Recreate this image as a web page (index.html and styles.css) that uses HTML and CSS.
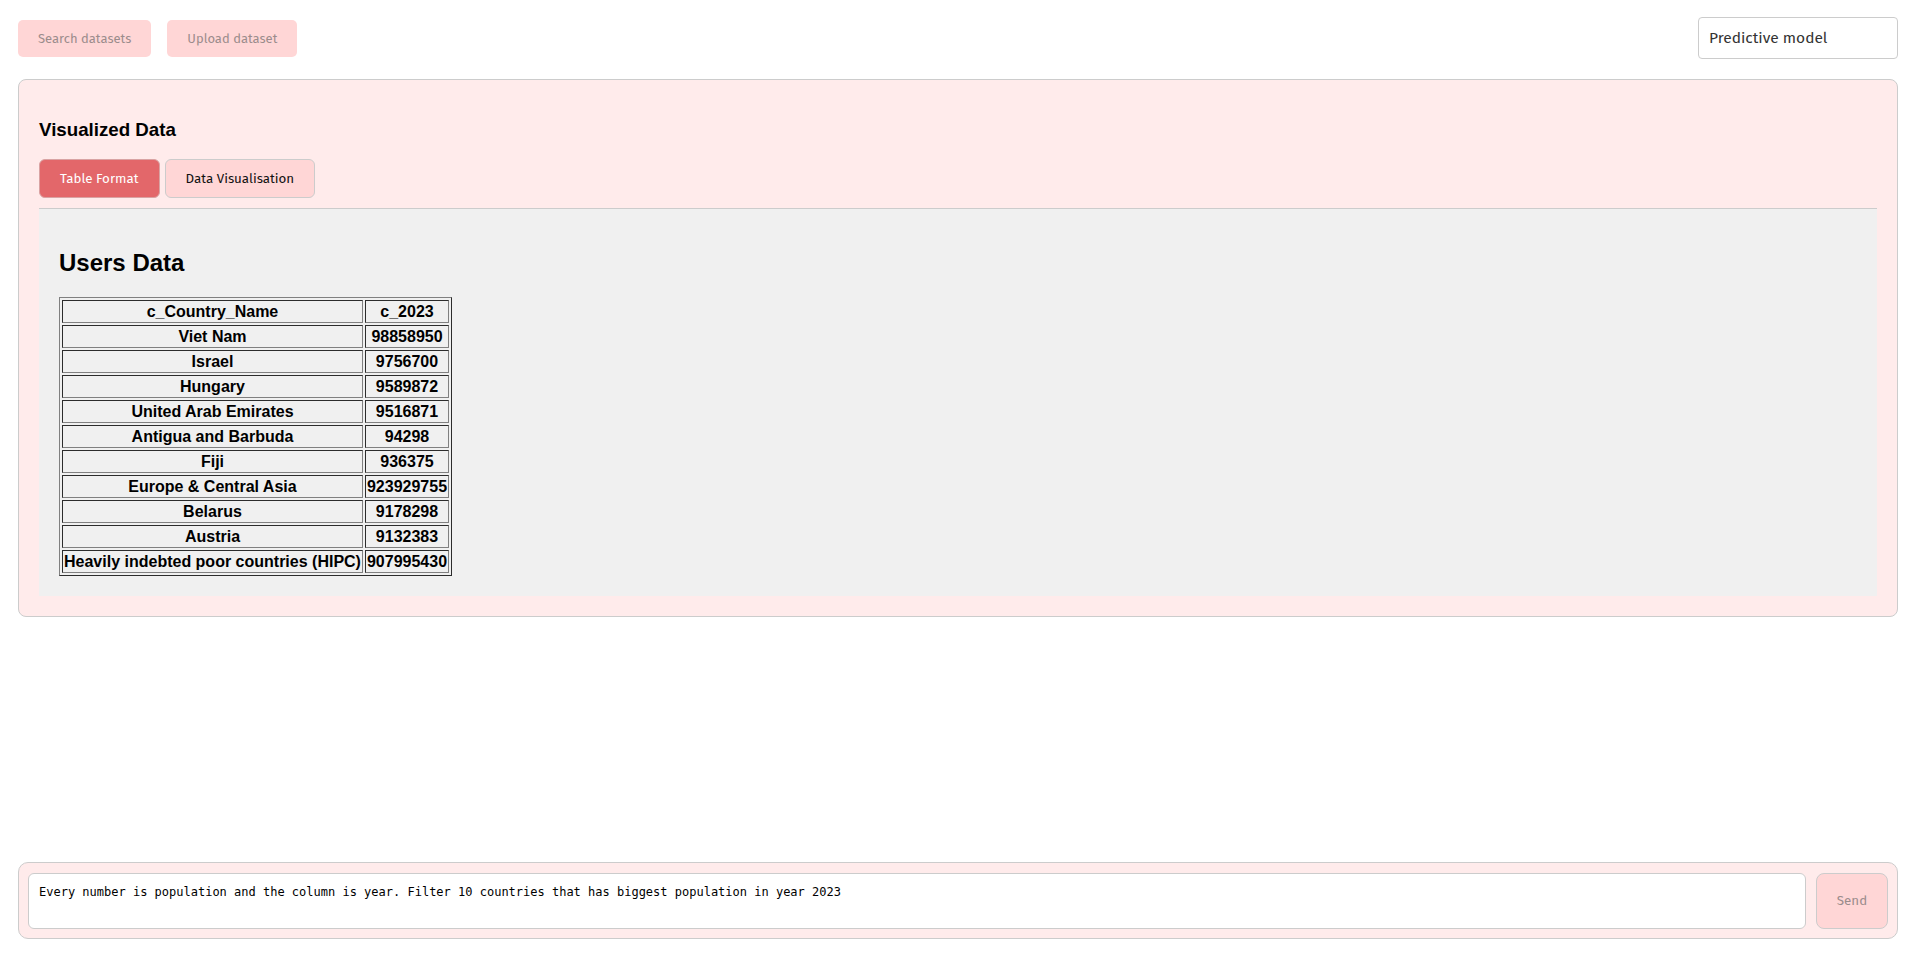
FILE: index.html
```html
<!DOCTYPE html>
<html lang="en">
<head>
  <meta charset="UTF-8" />
  <meta name="viewport" content="width=device-width, initial-scale=1.0"/>
  <title>Dataset Chat</title>
  <link rel="stylesheet" href="styles.css">
</head>
<body>
  <div class="top-bar">
    <div class="top-actions">
      <button class="top-btn" disabled>Search datasets</button>
      <button class="top-btn" disabled>Upload dataset</button>
    </div>
    <input class="model-input" type="text" value="Predictive model" />
  </div>

  <div class="panel">
    <h3>Visualized Data</h3>
    <div class="tabs">
      <button class="tab active">Table Format</button>
      <button class="tab">Data Visualisation</button>
    </div>
    <div class="tab-content">
      <h2>Users Data</h2>
      <table class="users-table">
        <tr><th>c_Country_Name</th><th>c_2023</th></tr>
        <tr><td>Viet Nam</td><td>98858950</td></tr>
        <tr><td>Israel</td><td>9756700</td></tr>
        <tr><td>Hungary</td><td>9589872</td></tr>
        <tr><td>United Arab Emirates</td><td>9516871</td></tr>
        <tr><td>Antigua and Barbuda</td><td>94298</td></tr>
        <tr><td>Fiji</td><td>936375</td></tr>
        <tr><td>Europe &amp; Central Asia</td><td>923929755</td></tr>
        <tr><td>Belarus</td><td>9178298</td></tr>
        <tr><td>Austria</td><td>9132383</td></tr>
        <tr><td>Heavily indebted poor countries (HIPC)</td><td>907995430</td></tr>
      </table>
    </div>
  </div>

  <div class="chat-bar">
    <textarea class="chat-input">Every number is population and the column is year. Filter 10 countries that has biggest population in year 2023</textarea>
    <button class="send-btn" disabled>Send</button>
  </div>
</body>
</html>
```

FILE: styles.css
```css
* {
  box-sizing: border-box;
}

body {
  margin: 0;
  min-height: 100vh;
  display: flex;
  flex-direction: column;
  padding: 17px 16px 21px 18px;
  font-family: 'Liberation Sans', Arial, sans-serif;
  background: #fff;
  color: #000;
}

button, input {
  font-family: 'Fira Sans', system-ui, sans-serif;
}

.top-bar {
  display: flex;
  justify-content: space-between;
  align-items: center;
  height: 42px;
}

.top-actions {
  display: flex;
  gap: 16px;
}

.top-btn {
  height: 37px;
  padding: 0 20px;
  border: none;
  border-radius: 5px;
  background: #ffd6d6;
  color: #9b8c8c;
  font-size: 13px;
}

.model-input {
  width: 200px;
  height: 42px;
  padding: 0 10px;
  border: 1px solid #ccc;
  border-radius: 4px;
  font-size: 15.5px;
  color: #333;
  outline: none;
}

.panel {
  margin-top: 20px;
  padding: 20px;
  background: #ffebeb;
  border: 1px solid #ccc;
  border-radius: 8px;
}

.panel h3 {
  font-size: 18.72px;
  margin: 18.72px 0;
}

.tabs {
  display: flex;
  gap: 5px;
  margin-bottom: 10px;
}

.tab {
  height: 39px;
  padding: 0 20px;
  border: 1px solid #ccc;
  border-radius: 6px;
  background: #ffd6d6;
  color: #111;
  font-size: 13.33px;
  cursor: pointer;
}

.tab.active {
  background: #e3676a;
  border-color: #d9a3a3;
  color: #fff;
}

.tab-content {
  padding: 20px;
  background: #f0f0f0;
  border-top: 1px solid #ccc;
}

.tab-content h2 {
  font-size: 24px;
  margin: 19.92px 0;
}

.users-table {
  border: 1px outset #808080;
  border-spacing: 2px;
}

.users-table th, .users-table td {
  border: 1px inset #808080;
  padding: 1px;
  font-size: 16px;
  line-height: 19px;
  font-weight: bold;
  text-align: center;
}

.chat-bar {
  margin-top: auto;
  display: flex;
  gap: 10px;
  padding: 10px 9px 9px;
  background: #ffebeb;
  border: 1px solid #ccc;
  border-radius: 10px;
}

.chat-input {
  flex: 1;
  height: 56px;
  padding: 11px 10px;
  border: 1px solid #ccc;
  border-radius: 6px;
  font-family: 'DejaVu Sans Mono', monospace;
  font-size: 12px;
  resize: none;
  outline: none;
}

.send-btn {
  width: 72px;
  border: 1px solid #ccc;
  border-radius: 8px;
  background: #ffd6d6;
  color: #9b8c8c;
  font-size: 13.33px;
}
```
